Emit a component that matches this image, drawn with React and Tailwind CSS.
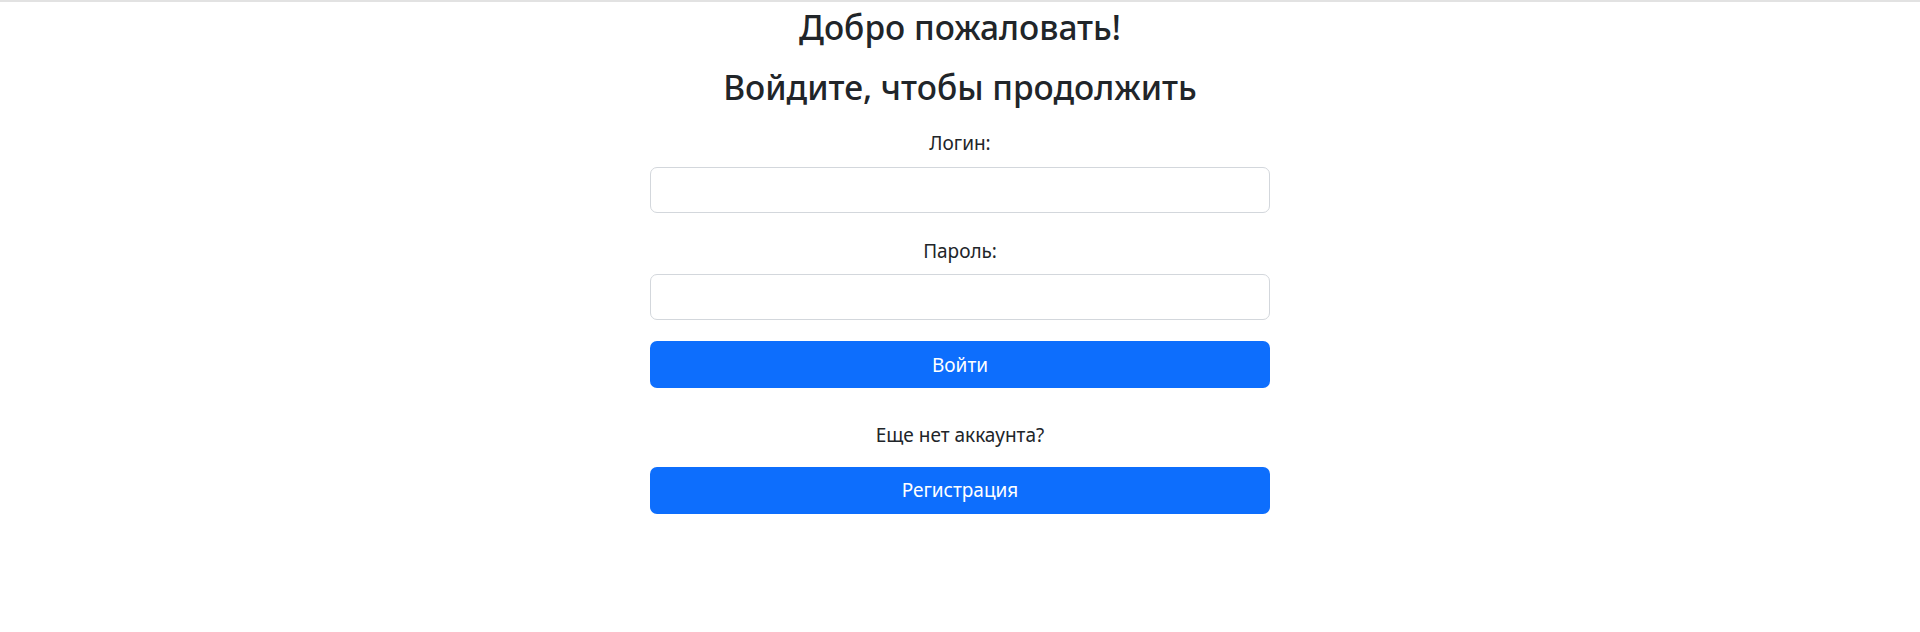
import { useState } from "react"

export default function App() {
  const [login, setLogin] = useState("")
  const [password, setPassword] = useState("")

  return (
    <div
      className="min-h-screen bg-white text-[#212529] text-[19px] leading-[1.5]"
      style={{ fontFamily: '"Noto Sans", "Open Sans", sans-serif' }}
    >
      {/* top rule */}
      <div className="h-[2px] bg-[#e2e2e2]" />

      <div className="w-[620px] mx-auto flex flex-col items-stretch text-center">
        <h2 className="mt-[5px] text-[33.5px] font-medium leading-[1.2]">Добро пожаловать!</h2>
        <h2 className="mt-[20px] text-[33.5px] font-medium leading-[1.2]">Войдите, чтобы продолжить</h2>

        <form className="flex flex-col" onSubmit={e => e.preventDefault()}>
          <label htmlFor="login" className="mt-[22px]">Логин:</label>
          <input
            id="login"
            type="text"
            value={login}
            onChange={e => setLogin(e.target.value)}
            className="mt-[9px] h-[46px] px-[14px] rounded-[7px] border border-[#d3d7dc] outline-none"
          />

          <label htmlFor="password" className="mt-[24px]">Пароль:</label>
          <input
            id="password"
            type="password"
            value={password}
            onChange={e => setPassword(e.target.value)}
            className="mt-[9px] h-[46px] px-[14px] rounded-[7px] border border-[#d3d7dc] outline-none"
          />

          <button
            type="submit"
            className="mt-[21px] h-[47px] rounded-[7px] bg-[#0d6efd] text-white"
          >
            Войти
          </button>
        </form>

        <p className="mt-[33px]">Еще нет аккаунта?</p>
        <button className="mt-[17px] h-[47px] rounded-[7px] bg-[#0d6efd] text-white">
          Регистрация
        </button>
      </div>
    </div>
  )
}
